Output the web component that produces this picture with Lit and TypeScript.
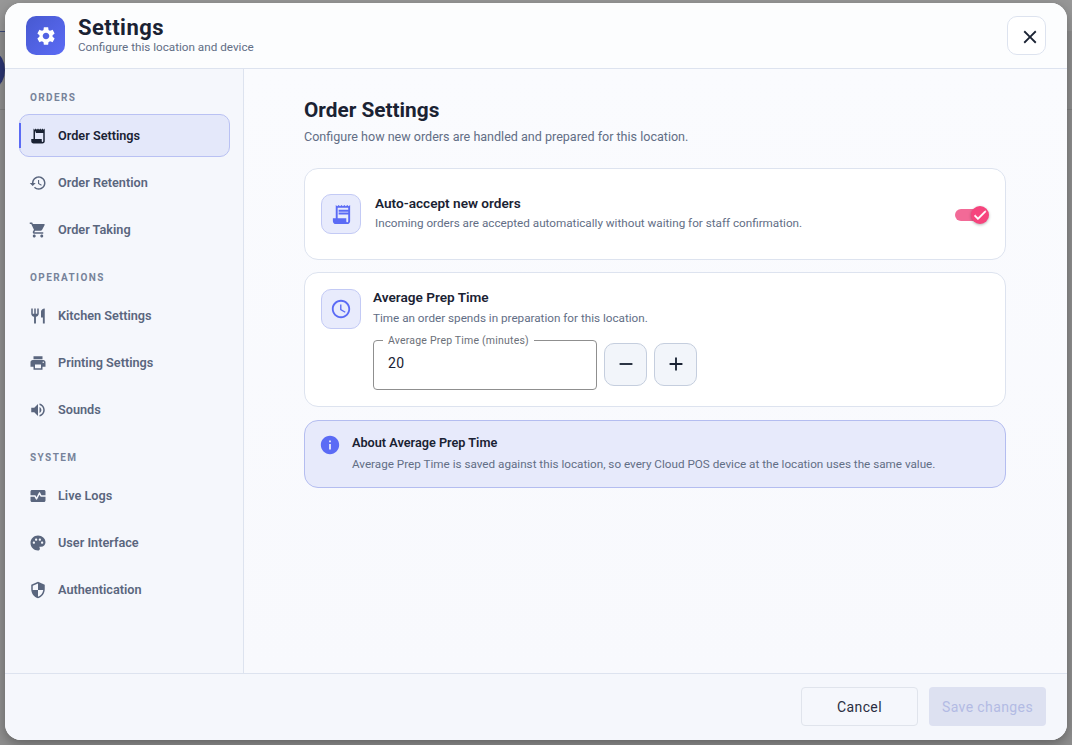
import { LitElement, html, svg, css } from 'lit';
import { customElement } from 'lit/decorators.js';

// Material icon paths used around the dialog
const ICONS: Record<string, string> = {
  gear: 'M19.14 12.94c.04-.3.06-.61.06-.94 0-.32-.02-.64-.07-.94l2.03-1.58c.18-.14.23-.41.12-.61l-1.92-3.32c-.12-.22-.37-.29-.59-.22l-2.39.96c-.5-.38-1.03-.7-1.62-.94l-.36-2.54c-.04-.24-.24-.41-.48-.41h-3.84c-.24 0-.43.17-.47.41l-.36 2.54c-.59.24-1.13.57-1.62.94l-2.39-.96c-.22-.08-.47 0-.59.22L2.74 8.87c-.12.21-.08.47.12.61l2.03 1.58c-.05.3-.09.63-.09.94s.02.64.07.94l-2.03 1.58c-.18.14-.23.41-.12.61l1.92 3.32c.12.22.37.29.59.22l2.39-.96c.5.38 1.03.7 1.62.94l.36 2.54c.05.24.24.41.48.41h3.84c.24 0 .44-.17.47-.41l.36-2.54c.59-.24 1.13-.56 1.62-.94l2.39.96c.22.08.47 0 .59-.22l1.92-3.32c.12-.22.07-.47-.12-.61l-2.01-1.58zM12 15.6c-1.98 0-3.6-1.62-3.6-3.6s1.62-3.6 3.6-3.6 3.6 1.62 3.6 3.6-1.62 3.6-3.6 3.6z',
  close: 'M19 6.41 17.59 5 12 10.59 6.41 5 5 6.41 10.59 12 5 17.59 6.41 19 12 13.41 17.59 19 19 17.59 13.41 12z',
  // solid foot, two wide bars
  receipt: 'M19.5 3.5 18 2l-1.5 1.5L15 2l-1.5 1.5L12 2l-1.5 1.5L9 2 7.5 3.5 6 2v14H3v3c0 1.66 1.34 3 3 3h12c1.66 0 3-1.34 3-3V2zM19 19c0 .55-.45 1-1 1s-1-.45-1-1v-3H8V5h11zM9 7h10v2H9zm0 3h10v2H9z',
  receiptNav: 'M19.5 3.5 18 2l-1.5 1.5L15 2l-1.5 1.5L12 2l-1.5 1.5L9 2 7.5 3.5 6 2v14H3v3c0 1.66 1.34 3 3 3h12c1.66 0 3-1.34 3-3V2zM19 19c0 .55-.45 1-1 1s-1-.45-1-1v-3H8V6h11zM9 6h10v2H9z',
  history: 'M13 3c-4.97 0-9 4.03-9 9H1l3.89 3.89.07.14L9 12H6c0-3.87 3.13-7 7-7s7 3.13 7 7-3.13 7-7 7c-1.93 0-3.68-.79-4.94-2.06l-1.42 1.42C8.27 19.99 10.51 21 13 21c4.97 0 9-4.03 9-9s-4.03-9-9-9zm-1 5v5l4.28 2.54.72-1.21-3.5-2.08V8H12z',
  cart: 'M7 18c-1.1 0-1.99.9-1.99 2S5.9 22 7 22s2-.9 2-2-.9-2-2-2zM1 2v2h2l3.6 7.59-1.35 2.45c-.16.28-.25.61-.25.96 0 1.1.9 2 2 2h12v-2H7.42c-.14 0-.25-.11-.25-.25l.03-.12.9-1.63h7.45c.75 0 1.41-.41 1.75-1.03l3.58-6.49c.08-.14.12-.31.12-.48 0-.55-.45-1-1-1H5.21l-.94-2H1zm16 16c-1.1 0-1.99.9-1.99 2s.89 2 1.99 2 2-.9 2-2-.9-2-2-2z',
  restaurant: 'M11 9H9V2H7v7H5V2H3v7c0 2.12 1.66 3.84 3.75 3.97V22h2.5v-9.03C11.34 12.84 13 11.12 13 9V2h-2v7zm5-3v8h2.5v8H21V2c-2.76 0-5 2.24-5 4z',
  print: 'M19 8H5c-1.66 0-3 1.34-3 3v6h4v4h12v-4h4v-6c0-1.66-1.34-3-3-3zm-3 11H8v-5h8v5zm3-7c-.55 0-1-.45-1-1s.45-1 1-1 1 .45 1 1-.45 1-1 1zm-1-9H6v4h12V3z',
  volume: 'M3 9v6h4l5 5V4L7 9H3zm13.5 3c0-1.77-1.02-3.29-2.5-4.03v8.05c1.48-.73 2.5-2.25 2.5-4.02zM14 3.23v2.06c2.89.86 5 3.54 5 6.71s-2.11 5.85-5 6.71v2.06c4.01-.91 7-4.49 7-8.77s-2.99-7.86-7-8.77z',
  monitor: 'M15.11 12.45 14 10.24l-3.11 6.21c-.16.34-.51.55-.89.55s-.73-.21-.89-.55L7.38 13H2v5c0 1.1.9 2 2 2h16c1.1 0 2-.9 2-2v-5h-6c-.38 0-.73-.21-.89-.55zM20 4H4c-1.1 0-2 .9-2 2v5h6c.38 0 .73.21.89.55L10 13.76l3.11-6.21c.34-.68 1.45-.68 1.79 0L16.62 11H22V6c0-1.1-.9-2-2-2z',
  palette: 'M12 2C6.49 2 2 6.49 2 12s4.49 10 10 10c1.38 0 2.5-1.12 2.5-2.5 0-.61-.23-1.2-.64-1.67-.08-.1-.13-.21-.13-.33 0-.28.22-.5.5-.5H16c3.31 0 6-2.69 6-6 0-4.96-4.49-9-10-9zm5.5 11c-.83 0-1.5-.67-1.5-1.5s.67-1.5 1.5-1.5 1.5.67 1.5 1.5-.67 1.5-1.5 1.5zm-3-4c-.83 0-1.5-.67-1.5-1.5S13.67 6 14.5 6s1.5.67 1.5 1.5S15.33 9 14.5 9zM5 11.5c0-.83.67-1.5 1.5-1.5s1.5.67 1.5 1.5S7.33 13 6.5 13 5 12.33 5 11.5zm6-4c0 .83-.67 1.5-1.5 1.5S8 8.33 8 7.5 8.67 6 9.5 6s1.5.67 1.5 1.5z',
  shield: 'M12 1 3 5v6c0 5.55 3.84 10.74 9 12 5.16-1.26 9-6.45 9-12V5l-9-4zm0 10.99h7c-.53 4.12-3.28 7.79-7 8.94V12H5V6.3l7-3.11v8.8z',
  clock: 'M11.99 2C6.47 2 2 6.48 2 12s4.47 10 9.99 10C17.52 22 22 17.52 22 12S17.52 2 11.99 2zM12 20c-4.42 0-8-3.58-8-8s3.58-8 8-8 8 3.58 8 8-3.58 8-8 8zM12.5 7H11v6l5.25 3.15.75-1.23-4.5-2.67z',
  info: 'M12 2C6.48 2 2 6.48 2 12s4.48 10 10 10 10-4.48 10-10S17.52 2 12 2zm1 15h-2v-6h2v6zm0-8h-2V7h2v2z',
  minus: 'M19 13H5v-2h14v2z',
  plus: 'M19 13h-6v6h-2v-6H5v-2h6V5h2v6h6v2z',
  check: 'M9 16.17 4.83 12l-1.42 1.41L9 19 21 7l-1.41-1.41z',
};

const icon = (name: string, size: number) =>
  html`<svg width=${size} height=${size} viewBox="0 0 24 24" fill="currentColor" aria-hidden="true">${svg`<path d=${ICONS[name]}></path>`}</svg>`;

interface NavItem {
  label: string;
  icon: string;
  active?: boolean;
}

const NAV: { title: string; items: NavItem[] }[] = [
  {
    title: 'ORDERS',
    items: [
      { label: 'Order Settings', icon: 'receiptNav', active: true },
      { label: 'Order Retention', icon: 'history' },
      { label: 'Order Taking', icon: 'cart' },
    ],
  },
  {
    title: 'OPERATIONS',
    items: [
      { label: 'Kitchen Settings', icon: 'restaurant' },
      { label: 'Printing Settings', icon: 'print' },
      { label: 'Sounds', icon: 'volume' },
    ],
  },
  {
    title: 'SYSTEM',
    items: [
      { label: 'Live Logs', icon: 'monitor' },
      { label: 'User Interface', icon: 'palette' },
      { label: 'Authentication', icon: 'shield' },
    ],
  },
];

@customElement('app-root')
export class AppRoot extends LitElement {
  static styles = css`
    :host {
      display: block;
      position: relative;
      height: 745px;
      box-sizing: border-box;
      padding: 3px 5px 5px;
      overflow: hidden;
      background: #8e8e8e;
      font-family: Roboto, 'Liberation Sans', sans-serif;
      color: #1a2233;
    }
    /* page behind the backdrop */
    .behind-top {
      position: absolute;
      left: 0;
      top: 0;
      right: 0;
      height: 31px;
      background: #979797;
    }
    .behind-line {
      position: absolute;
      left: 0;
      top: 31px;
      width: 5px;
      height: 1px;
      background: #3c4a78;
    }
    .behind-dot {
      position: absolute;
      left: -14px;
      top: 54px;
      width: 19px;
      height: 32px;
      border-radius: 50%;
      background: #2b3572;
    }
    .behind-rule {
      position: absolute;
      left: 0;
      right: 0;
      top: 109px;
      height: 1px;
      background: #808080;
    }
    .dialog {
      position: relative;
      height: 737px;
      display: flex;
      flex-direction: column;
      border-radius: 16px;
      overflow: hidden;
      background: #f9fafd;
      box-shadow: 0 4px 12px rgba(0, 0, 0, 0.3);
    }
    .header {
      flex: none;
      height: 66px;
      box-sizing: border-box;
      display: flex;
      align-items: center;
      gap: 13px;
      padding: 0 21px;
      background: #fcfdfe;
      border-bottom: 1px solid #dde3ef;
    }
    .logo {
      width: 39px;
      height: 39px;
      border-radius: 10px;
      display: flex;
      align-items: center;
      justify-content: center;
      color: #fff;
      background: linear-gradient(135deg, #4759d0, #5b6bf5);
    }
    .heading {
      flex: 1;
      padding-bottom: 2px;
    }
    .heading h1 {
      margin: 0;
      font-size: 22px;
      line-height: 24px;
      font-weight: 700;
      letter-spacing: 0.45px;
    }
    .heading p {
      margin: 0;
      font-size: 11.7px;
      line-height: 14px;
      color: #626e85;
    }
    .close {
      width: 39px;
      height: 39px;
      box-sizing: border-box;
      border: 1px solid #dde3ef;
      border-radius: 10px;
      padding: 3px 0 0 6px;
      background: #fff;
      display: flex;
      align-items: center;
      justify-content: center;
      color: #1a2233;
    }
    .body {
      flex: 1;
      display: flex;
      min-height: 0;
    }
    .sidebar {
      flex: none;
      width: 239px;
      box-sizing: border-box;
      padding: 21px 13px 0 14px;
      background: #f5f7fc;
      border-right: 1px solid #dde3ef;
    }
    .section {
      margin-bottom: 19px;
    }
    .section-title {
      height: 15px;
      line-height: 15px;
      padding-left: 11px;
      margin-bottom: 9px;
      font-size: 10px;
      font-weight: 700;
      letter-spacing: 1.4px;
      color: #77839a;
    }
    .nav-item {
      position: relative;
      height: 43px;
      box-sizing: border-box;
      display: flex;
      align-items: center;
      gap: 11px;
      padding-left: 9px;
      margin-bottom: 4px;
      border: 1px solid transparent;
      border-radius: 10px;
      font-size: 12.7px;
      font-weight: 600;
      color: #5a667e;
    }
    .nav-item:last-child {
      margin-bottom: 0;
    }
    .nav-item.active {
      background: #e4e8fa;
      border-color: #b9c1f3;
      color: #1a2233;
    }
    .nav-item.active::before {
      content: '';
      position: absolute;
      left: -1px;
      top: 8px;
      bottom: 8px;
      width: 2px;
      background: #5b6bf5;
    }
    .main {
      flex: 1;
      box-sizing: border-box;
      padding: 29px 61px 0 60px;
      background: linear-gradient(180deg, #fafbfe, #f8f9fd);
    }
    .main h2 {
      margin: 0;
      font-size: 20.8px;
      line-height: 24px;
      font-weight: 700;
    }
    .main .lead {
      margin: 7px 0 23px;
      font-size: 12.55px;
      line-height: 16px;
      color: #626e85;
    }
    .card {
      box-sizing: border-box;
      background: #fff;
      border: 1px solid #dde3ef;
      border-radius: 14px;
      margin-bottom: 12px;
      display: flex;
      padding: 16px;
    }
    .card.auto {
      height: 92px;
      align-items: center;
      gap: 14px;
    }
    .card.auto .card-text {
      padding-bottom: 4px;
    }
    .card.prep {
      height: 135px;
      gap: 12px;
      margin-bottom: 13px;
    }
    .card.prep .card-title {
      margin-top: -1px;
    }
    .card.prep .card-desc {
      margin-top: 4px;
    }
    .tile {
      flex: none;
      width: 40px;
      height: 40px;
      box-sizing: border-box;
      border-radius: 10px;
      border: 1px solid #c3caf5;
      background: #e8ebfc;
      color: #5b6bf5;
      display: flex;
      align-items: center;
      justify-content: center;
    }
    .card-text {
      flex: 1;
    }
    .card-title {
      font-size: 13.6px;
      line-height: 18px;
      font-weight: 600;
      color: #1a2233;
    }
    .card-desc {
      margin-top: 3px;
      font-size: 11.7px;
      line-height: 16px;
      color: #626e85;
    }
    .toggle {
      flex: none;
      position: relative;
      width: 34px;
      height: 22px;
      margin-top: 2px;
    }
    .track {
      position: absolute;
      left: 0;
      top: 5px;
      width: 28px;
      height: 12px;
      border-radius: 6px;
      background: #f26a97;
    }
    .thumb {
      position: absolute;
      right: 0;
      top: 2px;
      width: 18px;
      height: 18px;
      border-radius: 50%;
      background: #f6447d;
      color: #fff;
      display: flex;
      align-items: center;
      justify-content: center;
      box-shadow: 0 1px 3px rgba(0, 0, 0, 0.3);
    }
    .thumb svg {
      stroke: currentColor;
      stroke-width: 1;
    }
    .prep-row {
      display: flex;
      align-items: center;
      gap: 7px;
      margin-top: 14px;
    }
    .field {
      position: relative;
      width: 224px;
      height: 50px;
      box-sizing: border-box;
      border: 1px solid #8f8f8f;
      border-radius: 4px;
      padding: 0 14px 4px;
      display: flex;
      align-items: center;
      font-size: 14px;
      letter-spacing: 0.3px;
      color: #1a2233;
    }
    .field label {
      position: absolute;
      left: 9px;
      top: -6px;
      padding: 0 5px;
      background: #fff;
      font-size: 10.5px;
      line-height: 12px;
      letter-spacing: 0.2px;
      color: #6b6f78;
    }
    .step {
      width: 43px;
      height: 43px;
      box-sizing: border-box;
      border: 1px solid #c5cede;
      border-radius: 10px;
      margin-bottom: 2px;
      background: #f2f5fa;
      display: flex;
      align-items: center;
      justify-content: center;
      color: #1a2233;
    }
    .note {
      box-sizing: border-box;
      height: 68px;
      display: flex;
      gap: 11px;
      padding: 13px 14px;
      background: #e7eafb;
      border: 1px solid #b4bdf0;
      border-radius: 14px;
    }
    .note svg {
      flex: none;
      color: #5b6bf5;
    }
    .note-title {
      font-size: 12.7px;
      line-height: 18px;
      font-weight: 600;
      color: #1a2233;
    }
    .note-desc {
      margin-top: 4px;
      font-size: 11.7px;
      line-height: 16px;
      color: #626e85;
    }
    .footer {
      flex: none;
      height: 67px;
      box-sizing: border-box;
      display: flex;
      justify-content: flex-end;
      align-items: center;
      gap: 11px;
      padding: 0 21px 2px;
      background: #f5f7fc;
      border-top: 1px solid #dde3ef;
    }
    .btn {
      width: 117px;
      height: 39px;
      box-sizing: border-box;
      padding-top: 1px;
      border-radius: 4px;
      display: flex;
      align-items: center;
      justify-content: center;
      font-size: 14px;
      letter-spacing: 0.4px;
    }
    .btn.cancel {
      border: 1px solid #e0e4ec;
      color: #2a2e42;
    }
    .btn.save {
      background: #dde1f1;
      color: #b3bbe4;
    }
  `;

  render() {
    return html`
      <div class="behind-top"></div>
      <div class="behind-line"></div>
      <div class="behind-dot"></div>
      <div class="behind-rule"></div>
      <div class="dialog">
        <header class="header">
          <div class="logo">${icon('gear', 22)}</div>
          <div class="heading">
            <h1>Settings</h1>
            <p>Configure this location and device</p>
          </div>
          <div class="close">${icon('close', 22)}</div>
        </header>
        <div class="body">
          <nav class="sidebar">
            ${NAV.map(
              (s) => html`
                <div class="section">
                  <div class="section-title">${s.title}</div>
                  ${s.items.map(
                    (it) => html`
                      <div class="nav-item ${it.active ? 'active' : ''}">
                        ${icon(it.icon, 18)}<span>${it.label}</span>
                      </div>
                    `,
                  )}
                </div>
              `,
            )}
          </nav>
          <main class="main">
            <h2>Order Settings</h2>
            <p class="lead">Configure how new orders are handled and prepared for this location.</p>
            <div class="card auto">
              <div class="tile">${icon('receipt', 23)}</div>
              <div class="card-text">
                <div class="card-title">Auto-accept new orders</div>
                <div class="card-desc">Incoming orders are accepted automatically without waiting for staff confirmation.</div>
              </div>
              <div class="toggle">
                <div class="track"></div>
                <div class="thumb">${icon('check', 16)}</div>
              </div>
            </div>
            <div class="card prep">
              <div class="tile">${icon('clock', 22)}</div>
              <div class="card-text">
                <div class="card-title">Average Prep Time</div>
                <div class="card-desc">Time an order spends in preparation for this location.</div>
                <div class="prep-row">
                  <div class="field">
                    <label>Average Prep Time (minutes)</label>
                    20
                  </div>
                  <div class="step">${icon('minus', 22)}</div>
                  <div class="step">${icon('plus', 22)}</div>
                </div>
              </div>
            </div>
            <div class="note">
              ${icon('info', 22)}
              <div>
                <div class="note-title">About Average Prep Time</div>
                <div class="note-desc">Average Prep Time is saved against this location, so every Cloud POS device at the location uses the same value.</div>
              </div>
            </div>
          </main>
        </div>
        <footer class="footer">
          <div class="btn cancel">Cancel</div>
          <div class="btn save">Save changes</div>
        </footer>
      </div>
    `;
  }
}
